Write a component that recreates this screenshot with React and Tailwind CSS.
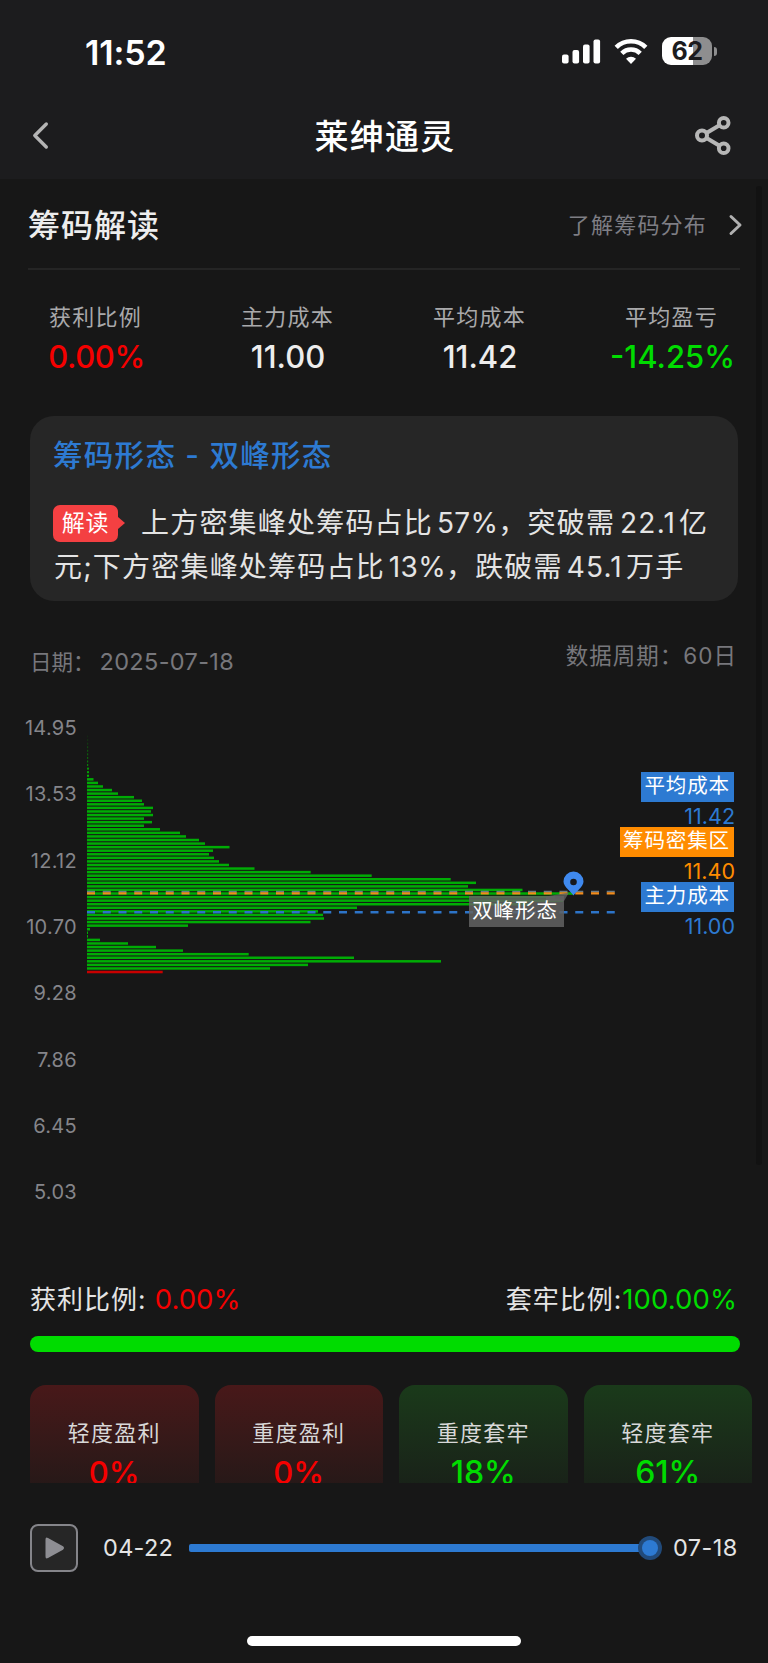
import React from 'react';

const stats = [
  { label: '获利比例', value: '0.00%', color: 'text-[#f50000] tracking-[-0.4px] pl-px' },
  { label: '主力成本', value: '11.00', color: 'text-[#ededed]' },
  { label: '平均成本', value: '11.42', color: 'text-[#ededed]' },
  { label: '平均盈亏', value: '-14.25%', color: 'text-[#00dc00] pl-px' },
];

const prices = ['14.95', '13.53', '12.12', '10.70', '9.28', '7.86', '6.45', '5.03'];

// Bar lengths from the highest price down, the last one is the profit side
const bars = [
  6.5, 11, 16, 25, 31, 47, 55, 57, 66, 64, 66, 57, 65, 57, 73, 93, 99, 112, 118, 142.5,
  126, 122, 127, 132, 142, 167.5, 223.7, 284.7, 363.7, 389, 381, 435.5, 486, 468, 476,
  444, 270, 231, 236, 237, 223.5, 101, 3, 1, 1, 13, 41, 69, 96, 161.7, 267, 354, 221, 183, 75.7,
];
const tail = [0.1, 0.15, 0.2, 0.3, 0.4, 0.45, 0.5, 0.6, 0.7, 0.8, 0.9, 1];

const tags = [
  { label: '平均成本', value: '11.42', bg: 'bg-[#2d7ad2]', color: 'text-[#2d7ad2]' },
  { label: '筹码密集区', value: '11.40', bg: 'bg-[#ff8c00]', color: 'text-[#ff8c00]' },
  { label: '主力成本', value: '11.00', bg: 'bg-[#2d7ad2]', color: 'text-[#2d7ad2]' },
];

const levels = [
  { label: '轻度盈利', value: '0%', bg: 'from-[#481819] to-[#191717]', color: 'text-[#f50000] text-[31px]' },
  { label: '重度盈利', value: '0%', bg: 'from-[#481819] to-[#191717]', color: 'text-[#f50000] text-[31px]' },
  { label: '重度套牢', value: '18%', bg: 'from-[#1a3a1a] to-[#171917]', color: 'text-[#00dc00] text-[32px]' },
  { label: '轻度套牢', value: '61%', bg: 'from-[#1a3a1a] to-[#171917]', color: 'text-[#00dc00] text-[32px]' },
];

function StatusBar() {
  return (
    <div className="flex h-[102px] items-center justify-between pl-[85px] pr-[51px]">
      <span className="pt-[2px] text-[34px] font-semibold tracking-[-0.1px] text-white">11:52</span>
      <div className="flex items-center">
        <svg width="40" height="26" viewBox="0 0 40 26" fill="#fff">
          <rect x="1" y="16.5" width="6.6" height="9" rx="2" />
          <rect x="11.5" y="12" width="6.6" height="13.5" rx="2" />
          <rect x="22" y="6.5" width="6.6" height="19" rx="2" />
          <rect x="32.5" y="1.5" width="6.6" height="24" rx="2" />
        </svg>
        <svg className="ml-[13px]" width="34" height="26" viewBox="0 0 34 26" fill="none" stroke="#fff" strokeWidth="4.6">
          <path d="M2.2 9.3a21 21 0 0 1 29.6 0" />
          <path d="M7.8 15.3a13.2 13.2 0 0 1 18.4 0" />
          <path d="M17 26l-5-5.2a7.3 7.3 0 0 1 10 0z" fill="#fff" stroke="none" />
        </svg>
        <div className="ml-[14px] flex h-[28px] w-[50px] items-center justify-center rounded-[9px] bg-[linear-gradient(90deg,#fff_62%,#8e8e8f_62%)]">
          <span className="text-[25px] font-bold leading-none tracking-[-0.5px] text-[#1c1c1e]">62</span>
        </div>
        <div className="ml-[2px] h-[9px] w-[3px] rounded-r-full bg-[#8e8e8f]" />
      </div>
    </div>
  );
}

function NavBar() {
  return (
    <div className="flex h-[77px] items-center justify-between pb-[9px] pl-[31px] pr-[36px]">
      <svg width="40" height="30" viewBox="0 0 40 30" fill="none" stroke="#b4b4b4" strokeWidth="3.4" strokeLinecap="round" strokeLinejoin="round">
        <path d="M15.3 3L3.8 14.500l11.500 11.500" />
      </svg>
      <h1 className="pl-[7px] pt-[2px] text-[34px] font-medium leading-none tracking-[1.2px] text-white">莱绅通灵</h1>
      <svg width="40" height="40" viewBox="0 0 40 40" fill="none" stroke="#b6b6b6" strokeWidth="4">
        <circle cx="10" cy="19.5" r="5" />
        <circle cx="31.7" cy="6.8" r="4.8" />
        <circle cx="31.7" cy="32.3" r="4.8" />
        <path d="M14.5 17l13-7.7M14.5 22l13 7.8" />
      </svg>
    </div>
  );
}

function ChipChart() {
  return (
    <div className="relative flex h-[532px]">
      <div className="flex w-[77px] flex-col text-right text-[20px] tracking-[0.3px] text-[#85858a]">
        {prices.map((p) => (
          <div key={p} className="flex h-[66.3px] items-center justify-end">{p}</div>
        ))}
      </div>
      <svg className="ml-[10px] shrink-0" width="530" height="532" viewBox="0 0 530 532">
        {tail.map((o, i) => (
          <rect key={i} x="0" y={40.5 + i * 3.568} width={i > 8 ? 2 : 1.2} height="2" fill="#00b400" opacity={o} />
        ))}
        {bars.map((w, i) => (
          <rect key={i} x="0" y={83.1 + i * 3.568} width={w} height="2.5" fill={i === bars.length - 1 ? '#c80000' : '#00ac05'} />
        ))}
        <path d="M0 196.600H528" stroke="#6c7c87" strokeWidth="1.6" strokeDasharray="8 7.75" />
        <path d="M0 198.400H528" stroke="#f28c1c" strokeWidth="2.2" strokeDasharray="8 7.75" />
        <path d="M0 217.300H528" stroke="#2d74c8" strokeWidth="2.4" strokeDasharray="8 7.75" />
        <path d="M459 201.500L482 197.500L477 206H459z" fill="#636363" fillOpacity="0.8" />
        <path d="M486.500 200.500c-1.800-3.500-10-8.300-10-14a10 10 0 1 1 20 0c0 5.700-8.200 10.500-10 14z" fill="#3f89ee" />
        <circle cx="486.500" cy="187" r="3.300" fill="#17191c" />
      </svg>
      <div className="absolute left-[469px] top-[201px] flex h-[31px] w-[95px] items-center justify-center bg-[#636363]/85 pr-[3px] text-[20.5px] tracking-[0.9px] text-white">
        双峰形态
      </div>
      <div className="flex flex-1 flex-col items-end pr-[34px] pt-[77px]">
        {tags.map((t) => (
          <React.Fragment key={t.label}>
            <div className={`${t.bg} flex h-[30px] items-center whitespace-nowrap pb-px pl-[3px] pr-[4px] text-[20.5px] tracking-[0.900px] text-white`}>
              {t.label}
            </div>
            <div className={`${t.color} -mr-px flex h-[25px] items-center pt-[3px] text-[21.5px]`}>{t.value}</div>
          </React.Fragment>
        ))}
      </div>
    </div>
  );
}

export default function App() {
  return (
    <div className="relative flex h-[1663px] w-[768px] flex-col overflow-hidden bg-[#171717] font-['Inter','Noto_Sans_CJK_SC',sans-serif]">
      <header className="bg-[#1c1c1e]">
        <StatusBar />
        <NavBar />
      </header>

      {/* Scrollable content, cut off above the player */}
      <main className="h-[1304px] overflow-hidden">
        <div className="mx-[28px] flex h-[91px] items-center justify-between border-b-2 border-[#252525] pt-[3px]">
          <h2 className="pt-[2px] text-[32px] font-medium leading-none tracking-[1px] text-[#ededed]">筹码解读</h2>
          <div className="-mr-[3px] flex items-center text-[22px] tracking-[1.2px] text-[#7e7e84]">
            了解筹码分布
            <svg className="ml-[20px]" width="16" height="22" viewBox="0 0 16 22" fill="none" stroke="#b0b0b0" strokeWidth="3" strokeLinecap="round" strokeLinejoin="round">
              <path d="M4 2.500L13 11l-9 8.500" />
            </svg>
          </div>
        </div>

        <div className="mt-[33px] grid grid-cols-4 text-center">
          {stats.map((s) => (
            <div key={s.label}>
              <div className="pr-px text-[22px] leading-[28px] tracking-[1.3px] text-[#a9a9ab]">{s.label}</div>
              <div className={`${s.color} mt-[6px] text-[31px] font-medium leading-[40px]`}>{s.value}</div>
            </div>
          ))}
        </div>

        <section className="mx-[30px] mt-[39px] h-[185px] rounded-[24px] bg-[#262626] px-[24px] pt-[19px]">
          <h3 className="-ml-px text-[29.5px] font-medium leading-[40px] tracking-[1.3px] text-[#2d7ad2]">筹码形态 - 双峰形态</h3>
          <div className="mt-[26px] whitespace-nowrap text-[28px] leading-[44px] tracking-[1.2px] text-[#e4e4e4]">
            <div className="flex items-center">
              <span className="-ml-px flex h-[37px] w-[65px] items-center justify-center rounded-[7px] bg-[#f44042] text-[23px] tracking-[0.8px] text-white">解读</span>
              <svg width="7" height="12" viewBox="0 0 7 12"><path d="M0 0l7 6-7 6z" fill="#f44042" /></svg>
              <span className="ml-[16px]">上方密集峰处筹码占比<span className="ml-[4px] tracking-[0.3px]">57%</span>，突破需<span className="ml-[5px] mr-[3px] tracking-[1.2px]">22.1</span>亿</span>
            </div>
            <div>元;下方密集峰处筹码占比<span className="ml-[4px] tracking-[0.3px]">13%</span>，跌破需<span className="ml-[4px] mr-[3px] tracking-[1.2px]">45.1</span>万手</div>
          </div>
        </section>

        <div className="flex h-[94px] justify-between pl-[30px] pr-[31px] text-[#77777c]">
          <div className="pt-[43px] text-[21.5px] leading-[36px]">日期：<span className="ml-[5px] text-[23.5px] tracking-[0.35px]">2025-07-18</span></div>
          <div className="pt-[37px] text-[22.5px] leading-[36px] tracking-[1px]">数据周期：60日</div>
        </div>

        <ChipChart />

        <div className="flex h-[109px] items-end justify-between pl-[30px] pr-[31px] text-[26px] leading-[36px] text-[#e4e4e4]">
          <div className="h-[55px] tracking-[1px]">获利比例: <span className="text-[27.5px] tracking-[0px] text-[#f50000]">0.00%</span></div>
          <div className="h-[55px] tracking-[1px]">套牢比例:<span className="text-[27.5px] tracking-[0.1px] text-[#00dc00]">100.00%</span></div>
        </div>
        <div className="ml-[30px] h-[16px] w-[710px] rounded-full bg-[#00dc00]" />

        <div className="ml-[30px] mt-[33px] flex gap-[16px]">
          {levels.map((l) => (
            <div key={l.label} className={`${l.bg} flex h-[140px] w-[168.5px] shrink-0 flex-col items-center rounded-[16px] bg-linear-to-b pt-[34px]`}>
              <div className="text-[22px] leading-[28px] tracking-[1.3px] text-[#d8d8d8]">{l.label}</div>
              <div className={`${l.color} mt-[6px] font-medium leading-[40px]`}>{l.value}</div>
            </div>
          ))}
        </div>
      </main>

      <footer className="flex flex-1 flex-col items-center pt-[41px]">
        <div className="flex h-[48px] w-full items-center pl-[30px] pr-[30px] text-[23.5px] text-[#e4e4e4]">
          <button className="flex size-[48px] items-center justify-center rounded-[8px] border-2 border-[#85858a] bg-[#262626]">
            <svg width="22" height="24" viewBox="0 0 22 24" fill="#8e8e93">
              <path d="M2.500 3.500Q2.500 .600 5 2L20 10.300Q22 12 20 13.700L5 22Q2.500 23.400 2.500 20.500z" />
            </svg>
          </button>
          <span className="ml-[25px] w-[86px] tracking-[0.3px]">04-22</span>
          <div className="relative h-[8px] w-[461px] rounded-[2px] bg-[#2d7ad2]">
            <span className="absolute -right-[12px] -top-[8px] flex size-[24px] items-center justify-center rounded-full bg-[#214a7a]">
              <span className="size-[16px] rounded-full bg-[#2d7ad2]" />
            </span>
          </div>
          <span className="ml-[23px] tracking-[0.4px]">07-18</span>
        </div>
        <div className="mt-[64px] h-[10px] w-[274px] rounded-full bg-white" />
      </footer>

      {/* Scroll indicator */}
      <div className="absolute right-[6px] top-[186px] h-[979px] w-[6px] rounded-full bg-[#121212]" />
    </div>
  );
}
